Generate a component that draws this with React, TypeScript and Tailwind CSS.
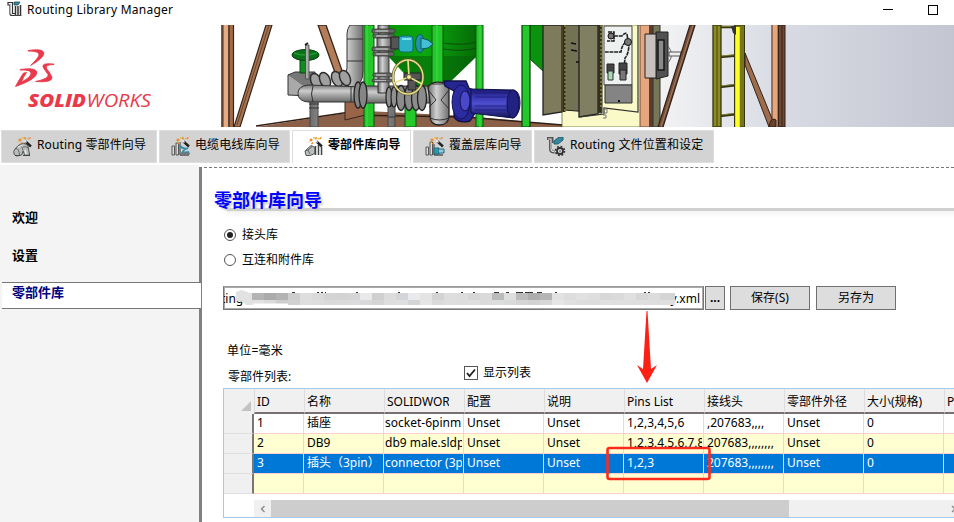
import type { ReactNode } from 'react';

const RED = '#e9394a';

function AppIcon() {
  return (
    <svg className="ml-[7px] h-4 w-4 shrink-0" viewBox="0 0 16 16" fill="none">
      <path d="M1 1.500h4.500v11h3M1 1v3h2v8.500q0 2 2 2h3" stroke="#333" strokeWidth="1.200" />
      <path d="M3.500 3v9q0 1.500 1.500 1.500" stroke="#bbb" />
      <path d="M7 1h6l-2 3H7z" fill="#2e8fa3" stroke="#234" strokeWidth=".7" />
      <path d="M8.500 5v9M11 5v9M13.500 4v10" stroke="#333" strokeWidth="1.500" />
      <path d="M7 14.500h7.500" stroke="#444" />
    </svg>
  );
}

function Wand() {
  return (
    <g>
      <path d="M12.500 4.500L18 9.500" stroke="#222" strokeWidth="2.400" />
      <path d="M11.500 3.500l2 2" stroke="#eee" strokeWidth="1.400" />
      <path d="M7 1.500v3M5.500 3h3M12 0v2.500M15.500 2l2-1.500M9 5.500l-1.500 1.500" stroke="#e88a28" strokeWidth="1.400" />
      <path d="M9 .8h2M14 1l1 1M4.500 5h1" stroke="#e8bd28" strokeWidth="1.200" />
    </g>
  );
}

function PipeWandIcon() {
  return (
    <svg className="h-5 w-5 shrink-0" viewBox="0 0 20 20" fill="none">
      <path d="M.7 14.500l2-3.500 4-3.500q4-2.500 7 0 2 2 2 5.500l1 5-5 .5-1.500-4.500-1.500 4-5 1-2.500-1.500z" fill="#b9bdbd" stroke="#555" />
      <path d="M3 11.500q3 0 3.500 6.500M6 8.500q4 1 4 5M10 10q3-1 5 1" stroke="#666" />
      <path d="M5 10l4-1.500M12 13l1 4" stroke="#f2f2f2" strokeWidth="1.200" />
      <path d="M2 18.500h5M10 18.500h7" stroke="#444" strokeWidth="1.200" />
      <Wand />
    </svg>
  );
}

function CableWandIcon() {
  return (
    <svg className="h-5 w-5 shrink-0" viewBox="0 0 20 20" fill="none">
      <path d="M1 9h2.500v9H1zM5 6h2.500v12H5z" fill="#ddd" stroke="#555" />
      <path d="M9 18V5M9 18h9" stroke="#555" strokeWidth="1.300" />
      <path d="M9 9q4 4 8 2-4 1-6 5l7-1" stroke="#2f8fa8" strokeWidth="1.800" />
      <path d="M11 16.500h8" stroke="#777" strokeWidth="1.700" />
      <Wand />
    </svg>
  );
}

function PartsWandIcon() {
  return (
    <svg className="h-5 w-5 shrink-0" viewBox="0 0 20 20" fill="none">
      <path d="M1 14l6-5.500 4 2v6l-5 2H2z" fill="#b9bebe" stroke="#555" />
      <path d="M1 14l3-1 2 4M4 13l5-4" stroke="#666" />
      <path d="M11.500 9v9M14.500 8v10M17.500 10v8" stroke="#444" strokeWidth="1.600" />
      <path d="M13 10v8M16 10v8" stroke="#ddd" />
      <Wand />
    </svg>
  );
}

function CoverWandIcon() {
  return (
    <svg className="h-5 w-5 shrink-0" viewBox="0 0 20 20" fill="none">
      <path d="M1 10h2.500v8H1zM5 5h2.500v13H5z" fill="#ddd" stroke="#555" />
      <path d="M9 18V7M9 18h9" stroke="#555" strokeWidth="1.300" />
      <path d="M9 11h5v6H9z" fill="#3597ae" stroke="#236b80" />
      <path d="M14 12h5v4h-5" fill="#8ecbd8" stroke="#236b80" />
      <Wand />
    </svg>
  );
}

function RoutingGearIcon() {
  return (
    <svg className="h-5 w-5 shrink-0" viewBox="0 0 20 20" fill="none">
      <path d="M1 1.500h5v3H4.500V12q0 3 4 3" stroke="#555" strokeWidth="3" />
      <path d="M2 2h3v10q0 2.500 3 2.500" stroke="#ddd" strokeWidth="1.200" />
      <path d="M8 4l5-4h4v3l-5 4H8z" fill="#35889d" stroke="#245d6d" />
      <circle cx="14" cy="14" r="3" fill="#ddd" stroke="#333" strokeWidth="1.800" />
      <circle cx="14" cy="14" r="4.500" stroke="#333" strokeWidth="1.600" strokeDasharray="1.800 1.734" />
      <circle cx="14" cy="14" r=".8" fill="#333" />
    </svg>
  );
}

function Logo() {
  return (
    <svg className="h-[102px] w-[220px] shrink-0" viewBox="0 25 220 102" fill={RED}>
      <g stroke={RED} strokeWidth=".8" strokeLinejoin="round">
        <path d="M28 50.500q15-2.500 16 2.500q-.5 5.500-13.500 12.500q7.500-7 8.500-10.500q.5-4-11-4z" />
        <path d="M20 69.500q15-2.500 17 2.500q.5 7-21.500 14.500q4.500-8.500 8-13.500l3-.5q-3.500 5-5 9.500q8-4 9.500-8q1-4.500-11-4z" fillRule="evenodd" />
        <path d="M54 64q-14-1.500-10.500 4l4.500 6.500q1.500 4-12.500 7q16.500 1.500 16.500-4q-.5-1.500-2.500-5l-3-4q-1.500-4 7.500-4z" />
      </g>
      <text x="28" y="106.500" fontFamily="'Open Sans','Noto Sans',sans-serif" fontSize="18" fontWeight="800" fontStyle="italic" textLength="58" lengthAdjust="spacingAndGlyphs">SOLID</text>
      <text x="86.500" y="106.500" fontFamily="'Open Sans','Noto Sans',sans-serif" fontSize="18" fontWeight="400" fontStyle="italic" textLength="64.500" lengthAdjust="spacingAndGlyphs">WORKS</text>
    </svg>
  );
}

function Flange({ x, y, w, h }: { x: number; y: number; w: number; h: number }) {
  return (
    <g stroke="#333" strokeWidth=".8">
      <rect x={x} y={y} width={w} height={h} rx="1.500" fill="#666" />
      <rect x={x + w * 0.15} y={y + h * 0.3} width={w * 0.55} height={h * 0.4} fill="#b4b4b4" stroke="none" />
    </g>
  );
}

function PlantBanner() {
  return (
    <svg className="h-[102px] w-[734px] shrink-0" viewBox="220 25 734 102" fill="none">
      <defs>
        <linearGradient id="sky"><stop offset="0" stopColor="#f3f3f4" /><stop offset=".4" stopColor="#d9dce4" /><stop offset="1" stopColor="#c3c6d1" /></linearGradient>
        <linearGradient id="pv"><stop offset="0" stopColor="#6c6c6c" /><stop offset=".4" stopColor="#d0d0d0" /><stop offset="1" stopColor="#6f6f6f" /></linearGradient>
        <linearGradient id="ph" x2="0" y2="1"><stop offset="0" stopColor="#777" /><stop offset=".35" stopColor="#cdcdcd" /><stop offset="1" stopColor="#686868" /></linearGradient>
        <linearGradient id="tank"><stop offset="0" stopColor="#079407" /><stop offset=".45" stopColor="#0aa80e" /><stop offset="1" stopColor="#066a06" /></linearGradient>
        <linearGradient id="motor" x2="0" y2="1"><stop offset="0" stopColor="#19196e" /><stop offset=".3" stopColor="#3a3ab5" /><stop offset=".5" stopColor="#4d4dd0" /><stop offset="1" stopColor="#15155a" /></linearGradient>
      </defs>
      <path d="M220 25h440v102H220z" fill="#fff" />
      <path d="M658 25h296v102H658z" fill="url(#sky)" />

      {/* floor and timber frame */}
      <path d="M256 127L346 113l20-2 100 5 97 9v2z" fill="#8b6048" />
      <path d="M256 126L350 112M345 115l120 2 98 8" stroke="#302018" strokeWidth="1.500" />
      <path d="M221.500 25H234v102h-12.500z" fill="#a16c4a" />
      <path d="M226 25v102" stroke="#e5ab83" strokeWidth="4" />
      <path d="M222 25v102M229 25v102M233.500 25v102" stroke="#39251a" strokeWidth="1.200" />
      <path d="M266 25h6L240 127h-6z" fill="#a8744f" stroke="#39251a" strokeWidth="1.200" />
      <path d="M269 25L237 125" stroke="#39251a" strokeWidth=".6" />
      <path d="M318 25h8l19 54-7 2z" fill="#b27d58" stroke="#39251a" strokeWidth="1.300" />
      <path d="M345 95h20v20l-20 5z" fill="#996447" stroke="#39251a" />

      {/* tanks and green supports */}
      <path d="M384 25h93v31l-34 33h-25l-30-33z" fill="url(#tank)" />
      <path d="M388 56h89L443 88h-22z" fill="#065f09" opacity=".55" />
      <path d="M443 43q20 3 34-1M443 49q20 3 34-1" stroke="#084d0a" />
      <path d="M364 25h10v102h-10zM432 25h11v65h-11zM476 25h7v102h-7zM405 100h11v27h-11z" fill="#25c82b" stroke="#0a550c" />
      <path d="M367 25v102M480 25v102M437 25v60" stroke="#35d83b" strokeWidth="1.500" />
      <path d="M530 25h14v47l-14-13z" fill="#0a930c" stroke="#084d0a" />
      <path d="M522 25h8v102h-8z" fill="#25c82b" stroke="#083d0a" strokeWidth="1.200" />

      {/* piping */}
      <path d="M350 25h13v46q0 17-14 17h-13V76q11 0 11-8V34q0-5 3-9z" fill="url(#pv)" stroke="#333" />
      <path d="M347 39h16M347 61h16" stroke="#333" />
      <path d="M310 100h8v27h-8zM388 101h7v26h-7z" fill="url(#pv)" stroke="#444" />
      <path d="M309 104h10M309 108h10M388 106h7M388 117h7" stroke="#333" />
      <path d="M288 75h22v21l-22-1z" fill="#a9a9a9" stroke="#333" />
      <path d="M288 75l7-3h20v15h-10" fill="#777" stroke="#333" />
      {[316, 325, 337, 345].map((x, i) => (
        <ellipse key={x} cx={x} cy={81 - i} rx="5" ry="8" fill="#a0a0a0" stroke="#2c2c2c" strokeWidth="1.500" transform={`rotate(-24 ${x} ${81 - i})`} />
      ))}
      <path d="M308 85q-10 1-10 8.500t10 8.500h56V87z" fill="url(#ph)" stroke="#333" />
      <path d="M313 86q-3 8 0 16M351 87v15" stroke="#333" />
      <path d="M300 59h7v14h-7z" fill="#118c22" stroke="#094410" />
      <ellipse cx="305.500" cy="55" rx="13.500" ry="5.500" fill="#0a7119" stroke="#063b0c" />
      <path d="M294 53q11 4 23 0" stroke="#219733" strokeWidth="1.500" />
      <path d="M305.500 45h3.500v34h-3.500z" fill="#aaa" stroke="#444" strokeWidth=".8" />
      <path d="M305 45l3-2" stroke="#222" strokeWidth="2" />
      <path d="M366 86h64v17h-64z" fill="url(#ph)" stroke="#333" />
      <path d="M378 25h11v68h-11z" fill="url(#pv)" stroke="#333" />
      <Flange x={372} y={29} w={23} h={4} />
      <Flange x={373} y={34} w={21} h={4} />
      <path d="M377 38h14v9h-14z" fill="url(#pv)" stroke="#333" />
      <Flange x={372} y={47} w={23} h={4} />
      <Flange x={373} y={52} w={21} h={4} />
      <Flange x={373} y={73} w={19} h={4} />
      <Flange x={372} y={79} w={20} h={3} />
      <path d="M391 37h8v12h-8z" fill="#555" stroke="#222" />
      {[358, 363].map((x) => (
        <ellipse key={x} cx={x} cy="95" rx="4" ry="13" fill="#858585" stroke="#222" strokeWidth="1.300" />
      ))}
      {[389, 394].map((x) => (
        <ellipse key={x} cx={x} cy="97" rx="3" ry="10" fill="#909090" stroke="#222" strokeWidth="1.200" />
      ))}
      {[401, 409, 416, 422].map((x) => (
        <ellipse key={x} cx={x} cy="98" rx="4.500" ry="12.500" fill="#8c8c8c" stroke="#222" strokeWidth="1.300" />
      ))}
      <path d="M404 73h17v7h-17zM408 80h8v10h-8z" fill="#555" stroke="#222" />
      <rect x="399" y="36" width="14" height="16" rx="3" fill="#2cb2c7" stroke="#176675" />
      <path d="M402 39h9" stroke="#7be4ee" strokeWidth="2" />
      <ellipse cx="420" cy="43.500" rx="4.500" ry="9" fill="#1e94aa" stroke="#155664" />
      <path d="M421 38l7 2 5 4-5 4-7 1z" fill="#42bfd3" stroke="#155664" />
      <ellipse cx="408" cy="77" rx="15" ry="17" stroke="#5d5931" strokeWidth="2.800" />
      <ellipse cx="408" cy="77" rx="15" ry="17" stroke="#e8df86" strokeWidth="1.500" />
      <path d="M408 60l1 17-15 6M409 77l13 7" stroke="#e8df86" strokeWidth="1.700" />
      <circle cx="409" cy="77" r="2.500" fill="#f2eaa0" stroke="#5d5931" />

      {/* pump and motor */}
      <path d="M428 87q5-7 16-4l5 5v29q-1 8-10 8t-9-9V102z" fill="url(#pv)" stroke="#222" strokeWidth="1.300" />
      <path d="M429 91l7 9-7 7M449 90l-8 10 8 9M430 118q9 4 19 0M432 84h16" stroke="#333" />
      <path d="M444 81h22l3 7 6 3v22l-5 8q-11 3-16-4V91l-9-5z" fill="#252594" stroke="#11114a" strokeWidth="1.300" />
      <ellipse cx="461" cy="102" rx="9" ry="17" fill="#2c2ca2" stroke="#141454" />
      <ellipse cx="465" cy="101" rx="5" ry="10" fill="#4848c9" stroke="#141454" />
      <path d="M471 89l43 1q6 2 6 13t-7 15l-42-5z" fill="url(#motor)" stroke="#11114a" />
      <path d="M475 93h33M475 97h33M475 106h33M475 110h33" stroke="#191976" strokeWidth=".7" />
      <ellipse cx="513" cy="104" rx="6" ry="14" fill="#222283" stroke="#11114a" />

      {/* control cabinet */}
      <path d="M562 25h79v102h-79z" fill="#fafac8" stroke="#555522" strokeWidth=".7" />
      <path d="M564 25h38v88l-38-3z" fill="#737255" stroke="#222" />
      <path d="M543 25h19v87l-19 3z" fill="#7d7b5c" stroke="#222" strokeWidth="1.300" />
      <path d="M564 25v87M600 25v87" stroke="#332f16" strokeWidth="3" />
      <path d="M565 25v87M601 25v84" stroke="#a69244" strokeWidth="1.200" strokeDasharray="2 2" />
      <path d="M579 25h19v89l-19 3z" fill="#817f61" stroke="#222" strokeWidth="1.300" />
      <path d="M571 43l5 1M571 50l6 1M576 62h3" stroke="#111" strokeWidth="1.500" />
      <path d="M604 26h28v59h-28z" fill="#edf2f1" stroke="#444" />
      <path d="M608 32h6v9h-7M614 36h8q3-4 5-2l1 7q-6 2-7 11h-16M629 42q0 12-4 16l-1 10" stroke="#222" strokeWidth="1.600" strokeDasharray="4 .7" />
      <circle cx="611" cy="36" r="3" fill="#777" stroke="#111" /><circle cx="628" cy="42" r="3.500" fill="#777" stroke="#111" />
      <path d="M607 64h7v9h-7zM619 63h8v11h-8z" fill="#444" stroke="#222" />
      <path d="M608 71h5v9h-5z" fill="#a6dbb4" stroke="#333" />
      <path d="M620 70h6v10h-6z" fill="#777" stroke="#222" />
      <path d="M605 85h27v18h-27z" fill="#848484" stroke="#333" />
      <path d="M618 101h2" stroke="#111" strokeWidth="2" />
      <path d="M580 117l24-3v-6l34 4V25" stroke="#333" strokeWidth="1.200" />
      <path d="M603 109h4v4h-4M603 115h3v3h-3" stroke="#777" />
      <path d="M640 25h12v102h-12z" fill="#e6a67e" stroke="#513323" strokeWidth=".8" />
      <path d="M649 25h6v102h-6z" fill="#5a3d2c" />
      <path d="M653 25h7v102h-7z" fill="#777656" stroke="#333" />
      <path d="M656 32h12v44l-12 3z" fill="#515151" stroke="#222" />
      <path d="M645 34h11v44h-11z" fill="#c9c1be" stroke="#222" />
      <path d="M658 40h6v30h-6z" fill="#8a8a8a" stroke="#171717" strokeWidth="1.500" />
      <path d="M668 46q7 9 0 17" stroke="#666" /><path d="M669 52h12v4h-12z" fill="#eee" stroke="#555" />

      {/* ladder and braces */}
      <path d="M690 25h5L663 127h-5z" fill="#76513d" stroke="#33231b" strokeWidth="1.300" />
      <path d="M693 25L661 127" stroke="#aa7959" />
      <path d="M721 27h16M720 57l17-1.500M720 87l17-2M720 116l17-2" stroke="#363611" strokeWidth="2.500" />
      <path d="M721 26.500h15M721 56l16-1.500M721 86l16-2M721 115l16-2" stroke="#8e8b34" strokeWidth=".8" />
      <path d="M713 25h8v102h-8z" fill="#8d8c24" stroke="#363611" strokeWidth="1.300" />
      <path d="M717 25v102" stroke="#49470e" />
      <path d="M734.500 25h10v102h-10z" fill="#77751d" stroke="#363611" />
      <path d="M737.500 27v100" stroke="#ffff25" strokeWidth="4.500" />
      <path d="M731 26h5v9l-3-2z" fill="#333" />
      <path d="M745 53l28 68v6h-4l-24-62z" fill="#9d6d4e" stroke="#33231b" />
      <path d="M772 25h13v102h-13z" fill="#70482f" stroke="#2e1e16" />
      <path d="M775 25v102" stroke="#e6a77f" strokeWidth="5" />
      <path d="M778.500 25v102M782 25v102" stroke="#35231a" />
      <path d="M769 127q1-8 5-8l2 1v7z" fill="#68432e" stroke="#2e1e16" />
    </svg>
  );
}

function Tab({ icon, label, width, active = false }: { icon: ReactNode; label: string; width: string; active?: boolean }) {
  return (
    <div className={`flex h-[33px] shrink-0 items-center border pl-[11px] ${width} ${active ? 'border-[#dedede] border-b-white bg-white font-bold' : 'border-[#dedede] bg-[#d3d3d3]'}`}>
      <span className="pt-px">{icon}</span>
      <span className="ml-[4px] pb-[3px] tracking-[.01em]">{label}</span>
    </div>
  );
}

function Radio({ label, checked = false }: { label: string; checked?: boolean }) {
  return (
    <label className="flex h-[25px] items-center">
      <span className="flex h-3 w-3 items-center justify-center rounded-full border border-[#555] bg-white">
        {checked && <span className="h-1.5 w-1.5 rounded-full bg-[#222]" />}
      </span>
      <span className="ml-1.5 pt-px">{label}</span>
    </label>
  );
}

const topTones = ['#b4b4b4', '#ababab', '#b3b3b3', '#cecece', '#dedede', '#dadada', '#d4d4d4', '#d3d3d3', '#d5d5d5', '#e8e9ed', '#cfcfcf', '#dcdcdc', '#d3d5da', '#e8eaef', '#e4e4e4', '#d3d3d5', '#dedede', '#dddddd', '#d6d6d6', '#dadada', '#b8bbbb', '#dedede', '#b9bbbc', '#aeaeaf', '#b5b5b5', '#e2e2e2', '#dddddd', '#e1e1e1', '#dedede', '#d8d8d8', '#dadada', '#e0e0e0', '#d7d7d7', '#dcdcdc', '#d5d5d5'];
const lowTones = ['#e1e1e1', '#dbdbdb', '#cecece', '#d1d1d1', '#dfdfdf', '#dddddd', '#dadada', '#dadada', '#dcdcdc', '#d9d9d9', '#d5d5d5', '#dedede', '#dfdfdf', '#d5d5d5', '#e6e6e6', '#dadada', '#dedede', '#dddddd', '#dedede', '#dadada', '#dddddd', '#dadada', '#d5d5d5', '#d2d2d2', '#d7d7d7', '#e6e6e6', '#e0e0e0', '#dddddd', '#dcdcdc', '#e0e0e0', '#dfdfdf', '#dedede', '#dfdfdf', '#dddddd', '#dfdfdf'];

function PathField() {
  return (
    <div className="relative flex h-6 w-[481px] shrink-0 items-center justify-between overflow-hidden border border-[#777] border-t-[#999] bg-white pt-0.5 shadow-[inset_1px_1px_0_#aaa,inset_-1px_-1px_0_#aaa]">
      <span className="-ml-[3px]">ting</span>
      <span className="mr-[3px]">y.xml</span>
      <svg className="absolute left-0 top-0 h-[22px] w-[480px]" viewBox="224 287 480 22">
        <path d="M292 292.500h3M317 292.500h2M321 292.500h2M325 292.500h1M356 292.500h2M398 292.500h2M436 292.500h2M461 292.500h2M473 292.500h2M494 292.500h5M506 292.500h3M516 292.500h7M525 292.500h8M537 292.500h5M555 292.500h2M644 292.500h2M648 292.500h2" stroke="#333" strokeWidth="1" />
        <path d="M236 292l6-2 8 3h3v12h-7l-3-3-7-1z" fill="#e2e2e2" />
        {topTones.map((c, i) => <rect key={i} x={252 + i * 12} y="293" width={i === 34 ? 15 : 12.1} height="7.200" fill={c} />)}
        {lowTones.map((c, i) => <rect key={i} x={252 + i * 12} y="300" width={i === 34 ? 15 : 12.1} height={i < 3 ? 3.500 : 5} fill={c} />)}
      </svg>
    </div>
  );
}

function Button({ label, width }: { label: string; width: string }) {
  return <button className={`h-6 shrink-0 border border-[#707070] bg-[#dddddd] leading-[22px] ${width}`}>{label}</button>;
}

const headers = ['ID', '名称', 'SOLIDWOR', '配置', '说明', 'Pins List', '接线头', '零部件外径', '大小(规格)', 'P'];
const rows = [
  ['1', '插座', 'socket-6pinm', 'Unset', 'Unset', '1,2,3,4,5,6', ',207683,,,,', 'Unset', '0', ''],
  ['2', 'DB9', 'db9 male.sldp', 'Unset', 'Unset', '1,2,3,4,5,6,7,8', '207683,,,,,,,,', 'Unset', '0', ''],
  ['3', '插头（3pin）', 'connector (3p', 'Unset', 'Unset', '1,2,3', '207683,,,,,,,,', 'Unset', '0', ''],
  ['', '', '', '', '', '', '', '', '', ''],
];
const rowStyles = ['bg-white', 'bg-[#ffffd2]', 'bg-[#0078d7] text-white', 'bg-[#ffffd2]'];

function PartsTable() {
  return (
    <div className="ml-[21px] h-[130px] w-[760px] shrink-0 border border-[#a5c9e9] bg-white">
      <div className="flex h-[25px]">
        <div className="flex w-[30px] shrink-0 items-end justify-end bg-[#f0f0f0] pb-[3px] pr-[3px]">
          <svg className="h-[10px] w-[10px]" viewBox="0 0 10 10"><path d="M10 0v10H0z" fill="#c3c3c3" /></svg>
        </div>
        {headers.map((h, i) => (
          <div key={h} className={`shrink-0 overflow-hidden whitespace-nowrap border-b-2 border-l border-b-[#777071] border-l-[#dcdcdc] bg-[#f0f0f0] pl-0.5 leading-[26px] ${i === 0 ? 'w-[50px]' : 'w-20'} ${i === 2 ? 'pr-[15px]' : ''}`}>
            <span className="block overflow-hidden">{h}</span>
          </div>
        ))}
      </div>
      {rows.map((r, n) => (
        <div key={n} className="flex h-5">
          <div className="w-[30px] shrink-0 border-b border-r-2 border-b-[#dedede] border-r-[#777] bg-[#f0f0f0]" />
          {r.map((v, i) => (
            <div key={i} className={`shrink-0 whitespace-nowrap border-b border-r border-[#ffcfcf] pr-px leading-[18px] ${i === 0 ? 'w-[50px] pl-[3px]' : i === 2 ? 'w-20 pl-px' : 'w-20 pl-[3px]'} ${rowStyles[n]}`}>
              <span className="block overflow-hidden">{v}</span>
            </div>
          ))}
        </div>
      ))}
      <div className="ml-[30px] mt-[6px] flex h-[17px] bg-[#f0f0f0]">
        <div className="flex w-[17px] items-center justify-center">
          <svg className="h-2 w-2" viewBox="0 0 8 8" fill="none"><path d="M5.500 1l-3 3 3 3" stroke="#888" strokeWidth="1.300" /></svg>
        </div>
        <div className="w-[518px] bg-[#cdcdcd]" />
        <div className="flex flex-1 items-center pl-[162px]">
          <svg className="h-2 w-2" viewBox="0 0 8 8" fill="none"><path d="M1 1l3 3-3 3" stroke="#888" strokeWidth="1.300" /></svg>
        </div>
      </div>
    </div>
  );
}

function SideItem({ label, active = false }: { label: string; active?: boolean }) {
  return (
    <div className={`flex h-[27px] items-center text-[13px] font-bold ${active ? 'relative z-10 ml-0.5 border-y border-[#777] bg-white pb-[7px] pl-[10px] text-[#000080]' : 'pb-[3px] pl-3'}`}>{label}</div>
  );
}

export default function App() {
  return (
    <div className="relative flex h-[522px] w-[954px] flex-col overflow-hidden bg-white font-['Noto_Sans','Noto_Sans_CJK_SC',sans-serif] text-[12px] leading-[18px] text-black">
      <header className="flex h-[25px] shrink-0 items-start pt-px">
        <AppIcon />
        <span className="ml-1 whitespace-nowrap tracking-[.02em]">Routing Library Manager</span>
        <div className="ml-auto mr-4 mt-[3px] flex h-[11px] items-center gap-[35px]">
          <span className="h-px w-[10px] bg-black" />
          <span className="h-[10px] w-[10px] border border-black" />
        </div>
      </header>
      <div className="flex h-[102px] shrink-0">
        <Logo />
        <PlantBanner />
      </div>
      <nav className="mb-[2px] mt-[3px] flex shrink-0 gap-[2px] pl-px">
        <Tab icon={<PipeWandIcon />} label="Routing 零部件向导" width="w-[156px]" />
        <Tab icon={<CableWandIcon />} label="电缆电线库向导" width="w-[131px]" />
        <Tab icon={<PartsWandIcon />} label="零部件库向导" width="w-[119px]" active />
        <Tab icon={<CoverWandIcon />} label="覆盖层库向导" width="w-[119px]" />
        <Tab icon={<RoutingGearIcon />} label="Routing 文件位置和设定" width="w-[180px]" />
      </nav>
      <div className="flex h-[357px]">
        <aside className="flex w-[199px] shrink-0 flex-col gap-[10.500px] bg-[#f4f4f4] pt-[40px]">
          <SideItem label="欢迎" />
          <SideItem label="设置" />
          <div className="mt-[2px] w-[201px]"><SideItem label="零部件库" active /></div>
        </aside>
        <main className="mt-[2px] flex min-w-0 flex-1 flex-col border-l-[3px] border-t border-l-[#808080] border-t-[#777] [border-top-style:dashed]">
          <div className="mt-[17px] flex h-8 shrink-0 items-end">
            <div className="relative h-8 flex-1">
              <div className="absolute left-[25px] right-0 top-[23px] h-[10px] bg-gradient-to-b from-[#d0d0d0] from-30% via-[#f5f5f5] via-35% to-white" />
              <h1 className="absolute left-3 top-px text-[18px] font-bold leading-[28px] text-[#0000ff] [text-shadow:2px_2px_2px_#cccccc]">零部件库向导</h1>
            </div>
          </div>
          <div className="ml-[22px] mt-[5px] flex flex-col">
            <Radio label="接头库" checked />
            <Radio label="互连和附件库" />
          </div>
          <div className="ml-[21px] mt-[14px] flex">
            <PathField />
            <div className="ml-px mr-[5px] flex"><Button label="..." width="w-5 font-bold" /></div>
            <div className="flex gap-[6px]">
              <Button label="保存(S)" width="w-20" />
              <Button label="另存为" width="w-20" />
            </div>
          </div>
          <div className="ml-[25px] mt-[32px] tracking-[.02em]">单位=毫米</div>
          <div className="ml-[26px] mt-[4px] flex h-[24px]">
            <span className="w-[236px] pt-[4px]">零部件列表:</span>
            <span className="mt-[2px] flex h-[14px] w-[14px] items-center justify-center border border-[#555]">
              <svg className="h-3 w-3" viewBox="0 0 12 12" fill="none"><path d="M2 6l2.500 3L10 2.500" stroke="#222" strokeWidth="1.800" /></svg>
            </span>
            <span className="ml-[5px]">显示列表</span>
          </div>
          <PartsTable />
        </main>
      </div>
      <svg className="pointer-events-none absolute left-0 top-0 z-20 h-[522px] w-[954px]" viewBox="0 0 954 522" fill="none">
        <path d="M646.500 311h1l3.500 58 6-4-10 18-10-18 6 4z" fill="#ff2015" />
        <rect x="607.500" y="448" width="102" height="31" rx="2" stroke="#ff2a1c" strokeWidth="2.600" />
      </svg>
    </div>
  );
}
